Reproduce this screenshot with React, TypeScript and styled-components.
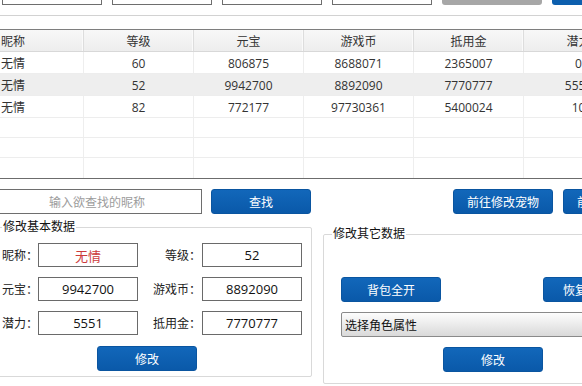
import React from 'react';
import styled, {createGlobalStyle} from "styled-components";

const GlobalStyle = createGlobalStyle`
    body {
        margin: 0;
        background: #fff;
        font-family: "Open Sans", "Noto Sans CJK SC", sans-serif;
        font-size: 12px;
        color: #222;
    }
`;

const Page = styled.div`
    width: 582px;
    height: 386px;
    overflow: hidden;
    background: #fff;
`;

const Window = styled.div`
    margin-top: -20px;
`;

const TopBar = styled.div`
    display: flex;
    gap: 10px;
    padding-left: 2px;
    height: 25px;
`;

const TopField = styled.div`
    flex: 0 0 100px;
    box-sizing: border-box;
    border: 1px solid #6e6e6e;
    background: #fff;
`;

const TopButton = styled.div<{ $tone: 'gray' | 'blue' }>`
    flex: 0 0 100px;
    border-radius: 3px;
    background: ${p => p.$tone === 'gray' ? '#a7a7a7' : '#0d5fae'};
`;

const Rule = styled.div`
    margin-top: 10px;
    height: 1px;
    background: #d2d2d2;
`;

const Table = styled.div`
    margin-top: 13px;
    border-top: 1px solid #7e7e7e;
    border-bottom: 1px solid #6c6c6c;
`;

const HeaderRow = styled.div`
    display: grid;
    grid-template-columns: 84px repeat(5, 110px);
    height: 22px;
    box-sizing: border-box;
    border-bottom: 1px solid #d8d8d8;
    background: linear-gradient(#f8f8f8, #ededed);
    color: #333;
`;

const BodyRow = styled.div<{ $alt?: boolean; $empty?: boolean }>`
    display: grid;
    grid-template-columns: 84px repeat(5, 110px);
    height: ${p => p.$empty ? '20px' : '22px'};
    box-sizing: border-box;
    border-bottom: 1px solid #ededed;
    background: ${p => p.$alt ? '#eeeeee' : '#fff'};
    color: #333;
    &:last-child {
        border-bottom: 0;
    }
`;

const Cell = styled.div<{ $head?: boolean }>`
    display: flex;
    align-items: center;
    justify-content: center;
    line-height: 14px;
    padding-top: 2px;
    border-right: 1px solid ${p => p.$head ? '#dddddd' : '#eeeeee'};
    box-shadow: ${p => p.$head ? 'inset -1px 0 0 #fafafa' : 'none'};
    &:first-child {
        justify-content: flex-start;
        padding-left: 1px;
    }
`;

const SearchRow = styled.div`
    display: flex;
    gap: 9px;
    margin-top: 10px;
    height: 25px;
`;

const SearchField = styled.div`
    margin-left: -8px;
    flex: 0 0 210px;
    box-sizing: border-box;
    border: 1px solid #6e6e6e;
    display: flex;
    align-items: center;
    justify-content: center;
    color: #9c9c9c;
`;

const RightButtons = styled.div`
    display: flex;
    gap: 10px;
    margin-left: 133px;
`;

const BlueButton = styled.button`
    flex: 0 0 100px;
    width: 100px;
    height: 25px;
    margin: 0;
    padding: 0;
    border: 1px solid #0a55a0;
    border-radius: 3px;
    background: linear-gradient(#1267ba, #0a59a9);
    color: #fff;
    font: inherit;
    font-size: 12px;
    white-space: nowrap;
    overflow: hidden;
`;

const Groups = styled.div`
    display: flex;
    align-items: flex-start;
    gap: 11px;
    margin-left: -10px;
`;

const Group = styled.fieldset<{ $side: 'left' | 'right' }>`
    margin: ${p => p.$side === 'left' ? '5px 0 0 0' : '12px 0 0 0'};
    box-sizing: border-box;
    width: ${p => p.$side === 'left' ? '322px' : '300px'};
    flex-shrink: 0;
    min-width: 0;
    border: 1px solid #d9d9d9;
    border-radius: 2px;
    padding: ${p => p.$side === 'left' ? '8px 9px 5px 11px' : '35px 0 11px 8px'};
`;

const Legend = styled.legend`
    padding: 0 1px;
    line-height: 16px;
    font-size: 12px;
    color: #111;
`;

const FormGrid = styled.div`
    display: grid;
    grid-template-columns: 36px 100px 64px 100px;
    grid-auto-rows: 24px;
    row-gap: 10px;
`;

const Label = styled.div<{ $right?: boolean }>`
    display: flex;
    align-items: center;
    justify-content: ${p => p.$right ? 'flex-end' : 'flex-start'};
    padding-right: ${p => p.$right ? '1px' : '0'};
    white-space: nowrap;
    color: #222;
`;

const ValueBox = styled.div<{ $red?: boolean }>`
    box-sizing: border-box;
    border: 1px solid #6a6a6a;
    display: flex;
    align-items: center;
    justify-content: center;
    font-size: 13px;
    color: ${p => p.$red ? '#cc3b3b' : '#111'};
`;

const SubmitRow = styled.div<{ $indent: number }>`
    display: flex;
    margin-top: ${p => p.$indent > 100 ? '10px' : '11px'};
    padding-left: ${p => p.$indent}px;
`;

const OtherBody = styled.div`
    padding-left: 9px;
`;

const ButtonPair = styled.div`
    display: flex;
    gap: 102px;
`;

const RoleSelect = styled.div`
    margin-top: 10px;
    width: 280px;
    height: 25px;
    box-sizing: border-box;
    border: 1px solid #8a8a8a;
    border-radius: 2px;
    background: linear-gradient(#fdfdfd, #d9d9d9);
    display: flex;
    align-items: center;
    padding-left: 3px;
    color: #111;
`;

const headers = ['昵称', '等级', '元宝', '游戏币', '抵用金', '潜力'];
const players = [
    ['无情', '60', '806875', '8688071', '2365007', '0'],
    ['无情', '52', '9942700', '8892090', '7770777', '5551'],
    ['无情', '82', '772177', '97730361', '5400024', '10'],
];

const fields = [
    ['昵称：', '无情', '等级：', '52'],
    ['元宝：', '9942700', '游戏币：', '8892090'],
    ['潜力：', '5551', '抵用金：', '7770777'],
];

export default function App() {
    return <Page>
        <GlobalStyle/>
        <Window>
            <TopBar>
                <TopField/><TopField/><TopField/><TopField/>
                <TopButton $tone={'gray'}/>
                <TopButton $tone={'blue'}/>
            </TopBar>
            <Rule/>
            <Table>
                <HeaderRow>
                    {headers.map(h => <Cell $head key={h}>{h}</Cell>)}
                </HeaderRow>
                {players.map((row, i) => <BodyRow key={i} $alt={i === 1}>
                    {row.map((v, j) => <Cell key={j}>{v}</Cell>)}
                </BodyRow>)}
                {[0, 1, 2].map(i => <BodyRow key={'e' + i} $empty>
                    {headers.map(h => <Cell key={h}/>)}
                </BodyRow>)}
            </Table>
            <SearchRow>
                <SearchField>输入欲查找的昵称</SearchField>
                <BlueButton>查找</BlueButton>
                <RightButtons>
                    <BlueButton>前往修改宠物</BlueButton>
                    <BlueButton>前往修改装备</BlueButton>
                </RightButtons>
            </SearchRow>
            <Groups>
                <Group $side={'left'}>
                    <Legend>修改基本数据</Legend>
                    <FormGrid>
                        {fields.map((f, i) => <React.Fragment key={i}>
                            <Label>{f[0]}</Label>
                            <ValueBox $red={i === 0}>{f[1]}</ValueBox>
                            <Label $right>{f[2]}</Label>
                            <ValueBox>{f[3]}</ValueBox>
                        </React.Fragment>)}
                    </FormGrid>
                    <SubmitRow $indent={95}>
                        <BlueButton>修改</BlueButton>
                    </SubmitRow>
                </Group>
                <Group $side={'right'}>
                    <Legend>修改其它数据</Legend>
                    <OtherBody>
                        <ButtonPair>
                            <BlueButton>背包全开</BlueButton>
                            <BlueButton>恢复默认值</BlueButton>
                        </ButtonPair>
                        <RoleSelect>选择角色属性</RoleSelect>
                        <SubmitRow $indent={102}>
                            <BlueButton>修改</BlueButton>
                        </SubmitRow>
                    </OtherBody>
                </Group>
            </Groups>
        </Window>
    </Page>;
}
